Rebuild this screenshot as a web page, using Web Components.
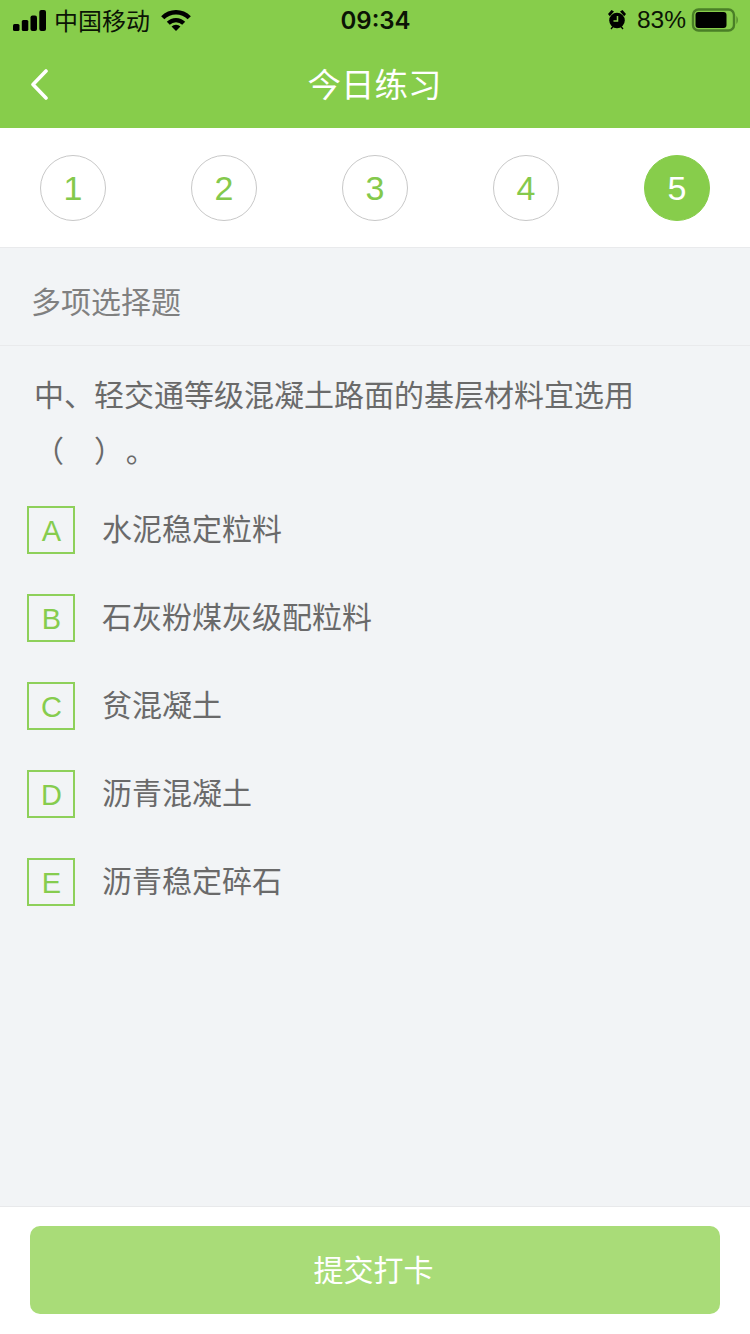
<!DOCTYPE html>
<html lang="zh">
<head>
<meta charset="utf-8">
<title>今日练习</title>
<style>
  html, body { margin: 0; padding: 0; }
  body {
    width: 750px;
    height: 1334px;
    display: flex;
    flex-direction: column;
    background: #f2f4f6;
    font-family: "Liberation Sans", "Noto Sans CJK SC", sans-serif;
    overflow: hidden;
  }
</style>
</head>
<body>
  <status-bar></status-bar>
  <nav-bar>今日练习</nav-bar>
  <step-list>
    <step-dot>1</step-dot>
    <step-dot>2</step-dot>
    <step-dot>3</step-dot>
    <step-dot>4</step-dot>
    <step-dot active>5</step-dot>
  </step-list>
  <section-title>多项选择题</section-title>
  <question-text>中、轻交通等级混凝土路面的基层材料宜选用<br>（　）&nbsp;。</question-text>
  <option-list>
    <option-row letter="A">水泥稳定粒料</option-row>
    <option-row letter="B">石灰粉煤灰级配粒料</option-row>
    <option-row letter="C">贫混凝土</option-row>
    <option-row letter="D">沥青混凝土</option-row>
    <option-row letter="E">沥青稳定碎石</option-row>
  </option-list>
  <submit-bar>提交打卡</submit-bar>

<script>
class StatusBar extends HTMLElement {
  constructor() {
    super()
    this.shadow = this.attachShadow({ mode: 'open' })
    this.shadow.innerHTML = `
      <style>
        :host { display: grid; grid-template-columns: 1fr auto 1fr; align-items: center; height: 40px; padding: 0 12px 0 13px; background: #87cd4b; color: #0b1405; font-size: 24px; }
        .left, .right { display: flex; align-items: center; }
        .right { justify-content: flex-end; }
        .carrier { margin-left: 8px; font-family: "Noto Sans CJK SC", sans-serif; font-size: 24px; line-height: 40px; }
        .wifi { margin-left: 11px; }
        .time { font-family: Inter, "Liberation Sans", sans-serif; font-size: 24px; font-weight: 600; }
        .alarm { margin-top: -1px; }
        .pct { margin-left: 10px; font-size: 24.500px; }
        .batt { margin-left: 5px; }
        svg { display: block; }
      </style>
      <div class="left">
        <svg width="33" height="21" viewBox="0 0 33 21"><rect x="0" y="14" width="6.500" height="7" rx="1.500"/><rect x="8.800" y="10" width="6.500" height="11" rx="1.500"/><rect x="17.500" y="5.500" width="6.500" height="15.500" rx="2"/><rect x="26.300" y="0" width="6.700" height="21" rx="2"/></svg>
        <span class="carrier">中国移动</span>
        <svg class="wifi" width="30" height="21" viewBox="0 0 30 21"><path d="M.15 6.150A21 21 0 0 1 29.850 6.150L26.670 9.330A16.500 16.500 0 0 0 3.330 9.330Z"/><path d="M5.810 11.810A13 13 0 0 1 24.190 11.810L21.220 14.780A8.800 8.800 0 0 0 8.780 14.780Z"/><path d="M10.550 16.550A6.300 6.300 0 0 1 19.450 16.550L15 21Z"/></svg>
      </div>
      <div class="time">09:34</div>
      <div class="right">
        <svg class="alarm" width="20" height="21" viewBox="0 0 20 21"><circle cx="10" cy="11.500" r="7.800"/><path d="M1 5 4.500 1 7 2.500 2.800 7.200zM19 5 15.500 1 13 2.500 17.200 7.200zM3.500 19.500l2-2.500 1 1-2 2.500zM16.500 19.500l-2-2.500-1 1 2 2.500z"/><path d="M10.500 7v5H6.500" fill="none" stroke="#87cd4b" stroke-width="1.500"/></svg>
        <span class="pct">83%</span>
        <svg class="batt" width="47" height="24" viewBox="0 0 47 24"><rect x="2" y="1.500" width="41" height="21" rx="5.500" fill="none" stroke="#4a7f27" stroke-width="2.400"/><rect x="4.500" y="4" width="31" height="16" rx="3"/><path d="M45.500 8c.8.800 1.200 2.300 1.200 4s-.4 3.200-1.200 4z" fill="#4a7f27"/></svg>
      </div>
    `
  }
}

class NavBar extends HTMLElement {
  constructor() {
    super()
    this.shadow = this.attachShadow({ mode: 'open' })
    this.shadow.innerHTML = `
      <style>
        :host { display: flex; position: relative; align-items: center; justify-content: center; height: 88px; background: #87cd4b; color: #fff; font-family: "Noto Sans CJK SC", sans-serif; font-size: 33.500px; }
        svg { position: absolute; left: 30px; top: 29px; }
        .title { margin-top: -3px; margin-right: 1px; }
      </style>
      <svg width="18" height="31" viewBox="0 0 18 31"><path d="M16 2 3 15.500 16 29" fill="none" stroke="#fff" stroke-width="3.600" stroke-linecap="round" stroke-linejoin="round"/></svg>
      <span class="title"><slot></slot></span>
    `
  }
}

class StepList extends HTMLElement {
  constructor() {
    super()
    this.shadow = this.attachShadow({ mode: 'open' })
    this.shadow.innerHTML = `
      <style>
        :host { display: flex; justify-content: space-between; align-items: flex-start; height: 120px; box-sizing: border-box; padding: 27px 40px 0; background: #fff; border-bottom: 1px solid #e9eaec; }
      </style>
      <slot></slot>
    `
  }
}

class StepDot extends HTMLElement {
  constructor() {
    super()
    this.shadow = this.attachShadow({ mode: 'open' })
    this.shadow.innerHTML = `
      <style>
        :host { display: flex; align-items: center; justify-content: center; box-sizing: border-box; width: 66px; height: 66px; border: 1px solid #c8c8c8; border-radius: 50%; color: #84c94c; font-size: 34px; }
        :host([active]) { background: #87cd4b; border-color: #87cd4b; color: #fff; }
      </style>
      <slot></slot>
    `
  }
}

class SectionTitle extends HTMLElement {
  constructor() {
    super()
    this.shadow = this.attachShadow({ mode: 'open' })
    this.shadow.innerHTML = `
      <style>
        :host { display: flex; align-items: center; height: 98px; box-sizing: border-box; padding: 7px 0 0 31px; border-bottom: 1px solid #e9eaec; color: #808080; font-family: "Noto Sans CJK SC", sans-serif; font-size: 30px; }
      </style>
      <slot></slot>
    `
  }
}

class QuestionText extends HTMLElement {
  constructor() {
    super()
    this.shadow = this.attachShadow({ mode: 'open' })
    this.shadow.innerHTML = `
      <style>
        :host { display: block; padding: 19px 34px 0; color: #6a6a6a; font-family: "Noto Sans CJK SC", sans-serif; font-size: 30px; line-height: 56px; word-spacing: -5px; }
      </style>
      <slot></slot>
    `
  }
}

class OptionList extends HTMLElement {
  constructor() {
    super()
    this.shadow = this.attachShadow({ mode: 'open' })
    this.shadow.innerHTML = `
      <style>
        :host { display: flex; flex-direction: column; flex: 1; gap: 40px; padding: 29px 0 0 27px; }
      </style>
      <slot></slot>
    `
  }
}

class OptionRow extends HTMLElement {
  constructor() {
    super()
    this.shadow = this.attachShadow({ mode: 'open' })
    this.shadow.innerHTML = `
      <style>
        :host { display: flex; align-items: center; gap: 27px; height: 48px; color: #6a6a6a; font-family: "Noto Sans CJK SC", sans-serif; font-size: 30px; }
        .box { display: flex; align-items: center; justify-content: center; box-sizing: border-box; width: 48px; height: 48px; padding: 2px 0 0 1px; border: 2px solid #8ed05a; color: #86cc4e; font-family: "Liberation Sans", sans-serif; font-size: 29px; }
        .label { margin-top: -6px; }
      </style>
      <span class="box">${this.getAttribute('letter')}</span>
      <span class="label"><slot></slot></span>
    `
  }
}

class SubmitBar extends HTMLElement {
  constructor() {
    super()
    this.shadow = this.attachShadow({ mode: 'open' })
    this.shadow.innerHTML = `
      <style>
        :host { display: block; box-sizing: border-box; height: 128px; padding: 19px 30px 0; background: #fff; border-top: 1px solid #e8e9eb; }
        .btn { display: flex; align-items: center; justify-content: center; height: 88px; border-radius: 10px; background: #a9dc78; color: #fff; font-family: "Noto Sans CJK SC", sans-serif; font-size: 30px; }
        .text { margin: -4px 3px 0 0; }
      </style>
      <div class="btn"><span class="text"><slot></slot></span></div>
    `
  }
}

customElements.define('status-bar', StatusBar)
customElements.define('nav-bar', NavBar)
customElements.define('step-list', StepList)
customElements.define('step-dot', StepDot)
customElements.define('section-title', SectionTitle)
customElements.define('question-text', QuestionText)
customElements.define('option-list', OptionList)
customElements.define('option-row', OptionRow)
customElements.define('submit-bar', SubmitBar)
</script>
</body>
</html>
